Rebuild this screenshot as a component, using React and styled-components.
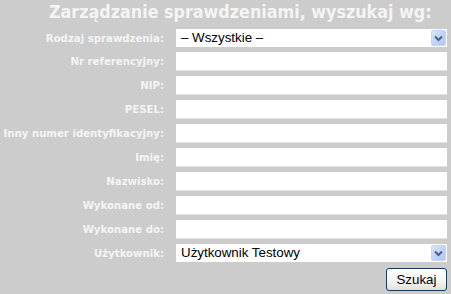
import React from 'react'
import styled, { createGlobalStyle } from 'styled-components'

const GlobalStyle = createGlobalStyle`
  html, body {
    margin: 0;
    padding: 0;
    background: #cccccc;
  }
`

const Panel = styled.div`
  width: 451px;
  height: 294px;
  background: #cccccc;
  font-family: "DejaVu Sans Condensed", "DejaVu Sans", sans-serif;
  overflow: hidden;
`

const Title = styled.h1`
  margin: 0 0 3px 0;
  padding-left: 49px;
  height: 26px;
  line-height: 24px;
  font-size: 17.75px;
  font-weight: bold;
  color: #f4f4f4;
  white-space: nowrap;
`

const Form = styled.div`
  display: grid;
  grid-template-columns: 164px 271px;
  column-gap: 12px;
  row-gap: 5px;
  align-items: center;
`

const Label = styled.label`
  text-align: right;
  font-size: 11.3px;
  font-weight: bold;
  color: #f4f4f4;
  white-space: nowrap;
`

const Field = styled.input`
  box-sizing: border-box;
  width: 271px;
  height: 19px;
  margin: 0;
  border: none;
  border-bottom: 1px solid #e4e4e4;
  background: #ffffff;
  font-family: "Liberation Sans", Arial, sans-serif;
  font-size: 13.33px;
  padding: 0 5px;
  outline: none;
`

const SelectWrap = styled.div`
  position: relative;
  width: 271px;
  height: 18px;
  background: #ffffff;
  font-family: "Liberation Sans", Arial, sans-serif;
  font-size: 13.33px;
  color: #000;
  line-height: 18px;
  padding-left: 5px;
  box-sizing: border-box;
`

const Arrow = styled.span`
  position: absolute;
  right: 1px;
  top: 1px;
  width: 15px;
  height: 16px;
  border-radius: 2px;
  background: linear-gradient(135deg, #dbe7fb 0%, #c1d3f7 50%, #b3c8f2 100%);
  border: 1px solid #c3d3fd;
  box-sizing: border-box;
  display: flex;
  align-items: center;
  justify-content: center;
`

const ButtonRow = styled.div`
  display: flex;
  justify-content: flex-end;
  padding-right: 4px;
  margin-top: 6px;
`

const Button = styled.button`
  box-sizing: border-box;
  width: 61px;
  height: 23px;
  border: 1px solid #1c3a5a;
  border-radius: 3px;
  background: linear-gradient(#ffffff 0%, #f4f4f0 60%, #e2e0d6 100%);
  font-family: "Liberation Sans", Arial, sans-serif;
  font-size: 13.33px;
  color: #000;
  padding: 0;
`

const Chevron = () => (
  <svg width="9" height="7" viewBox="0 0 9 7">
    <path d="M1 1.5 L4.5 5 L8 1.5" fill="none" stroke="#4d6185" strokeWidth="2" />
  </svg>
)

const Select = ({ value }) => (
  <SelectWrap>
    {value}
    <Arrow>
      <Chevron />
    </Arrow>
  </SelectWrap>
)

const fields = [
  'Nr referencyjny:',
  'NIP:',
  'PESEL:',
  'Inny numer identyfikacyjny:',
  'Imię:',
  'Nazwisko:',
  'Wykonane od:',
  'Wykonane do:',
]

export default function App() {
  return (
    <Panel>
      <GlobalStyle />
      <Title>Zarządzanie sprawdzeniami, wyszukaj wg:</Title>
      <Form>
        <Label>Rodzaj sprawdzenia:</Label>
        <Select value="– Wszystkie –" />
        {fields.map((f) => (
          <React.Fragment key={f}>
            <Label>{f}</Label>
            <Field type="text" />
          </React.Fragment>
        ))}
        <Label>Użytkownik:</Label>
        <Select value="Użytkownik Testowy" />
      </Form>
      <ButtonRow>
        <Button>Szukaj</Button>
      </ButtonRow>
    </Panel>
  )
}
